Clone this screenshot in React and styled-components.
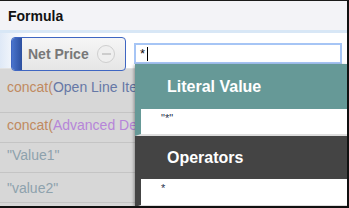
import React from "react";
import styled, { createGlobalStyle } from "styled-components";

const GlobalStyle = createGlobalStyle`
  body {
    margin: 0;
    font-family: "Liberation Sans", Arial, sans-serif;
  }
`;

const Frame = styled.div`
  position: relative;
  width: 349px;
  height: 208px;
  box-sizing: border-box;
  border-top: 1px solid #1a1a1a;
  border-right: 2px solid #111;
  border-bottom: 2px solid #111;
  background: #d7d7d7;
  overflow: hidden;
`;

const Header = styled.div`
  height: 29px;
  background: #f3f3f7;
  padding-left: 8px;
  font-size: 14px;
  font-weight: bold;
  color: #111;
  line-height: 30px;
`;

const EditorBar = styled.div`
  display: flex;
  align-items: flex-start;
  height: 38px;
  box-sizing: border-box;
  border-top: 3px solid #d8e7f6;
  padding: 4px 0 0 11px;
  background: linear-gradient(to right, #dfe9f7 0, #eef3fa 10px, #fff 30px);
`;

const Token = styled.div`
  display: flex;
  align-items: center;
  width: 115px;
  height: 34px;
  box-sizing: border-box;
  border: 1px solid #3f66c2;
  border-radius: 4px;
  overflow: hidden;
  background: linear-gradient(#f6f6f6, #e6e6e6);
`;

const Stripe = styled.div`
  align-self: stretch;
  width: 10px;
  background: linear-gradient(to right, #4a74cc, #2c4f9f);
`;

const TokenLabel = styled.span`
  flex: 1;
  padding-left: 6px;
  font-size: 14px;
  font-weight: bold;
  color: #787878;
`;

const RemoveButton = styled.span`
  display: flex;
  align-items: center;
  justify-content: center;
  width: 16px;
  height: 16px;
  margin-right: 10px;
  border: 1px solid #cfcfcf;
  border-radius: 50%;
  background: #efefef;

  &::after {
    content: "";
    width: 9px;
    height: 2px;
    background: #cdcdcd;
  }
`;

const Input = styled.div`
  display: flex;
  align-items: center;
  width: 208px;
  height: 21px;
  box-sizing: border-box;
  margin: 6px 0 0 8px;
  padding-left: 4px;
  border: 2px solid #a6c5f5;
  background: #fff;
  font-size: 13px;
  color: #111;
`;

const Caret = styled.span`
  width: 1px;
  height: 14px;
  margin-left: 2px;
  background: #000;
`;

const List = styled.div`
  border-top: 1px solid #e2e2e2;
`;

const Row = styled.div`
  height: ${(p) => p.$height || 30}px;
  box-sizing: border-box;
  padding: ${(p) => p.$top || 0}px 0 0 7px;
  border-bottom: 1px solid #c4c4c4;
  font-size: 14px;
  line-height: 24px;
  white-space: nowrap;
  overflow: hidden;
`;

const Fn = styled.span`
  color: #c08a60;
`;

const Arg = styled.span`
  color: ${(p) => p.$color};
`;

const Dropdown = styled.div`
  position: absolute;
  top: 63px;
  left: 135px;
  right: 0;
  bottom: 0;
  background: #fff;
  box-shadow: -1px 1px 3px rgba(0, 0, 0, 0.35);
`;

const SectionTitle = styled.div`
  height: ${(p) => p.$height}px;
  box-sizing: border-box;
  padding-left: 32px;
  background: ${(p) => p.$bg};
  color: #fff;
  font-size: 16px;
  font-weight: bold;
  line-height: ${(p) => p.$height}px;
`;

const Option = styled.div`
  height: ${(p) => p.$height}px;
  box-sizing: border-box;
  border-left: 6px solid ${(p) => p.$accent};
  border-bottom: 2px solid #dedede;
  padding-left: 20px;
  font-size: 11px;
  line-height: 18px;
  color: #2b3550;
`;

export default function App() {
  return (
    <>
      <GlobalStyle />
      <Frame>
        <Header>Formula</Header>
        <EditorBar>
          <Token>
            <Stripe />
            <TokenLabel>Net Price</TokenLabel>
            <RemoveButton />
          </Token>
          <Input>
            *<Caret />
          </Input>
        </EditorBar>
        <List>
          <Row $height={44} $top={6}>
            <Fn>concat(</Fn>
            <Arg $color="#6678a6">Open Line Items</Arg>
          </Row>
          <Row>
            <Fn>concat(</Fn>
            <Arg $color="#b685d9">Advanced Details</Arg>
          </Row>
          <Row>
            <Arg $color="#8ea2ad">"Value1"</Arg>
          </Row>
          <Row $top={3}>
            <Arg $color="#8ea2ad">"value2"</Arg>
          </Row>
        </List>
        <Dropdown>
          <SectionTitle $height={45} $bg="#669997">
            Literal Value
          </SectionTitle>
          <Option $height={27} $accent="#669997">
            "*"
          </Option>
          <SectionTitle $height={43} $bg="#444444">
            Operators
          </SectionTitle>
          <Option $height={28} $accent="#444444">
            *
          </Option>
        </Dropdown>
      </Frame>
    </>
  );
}
